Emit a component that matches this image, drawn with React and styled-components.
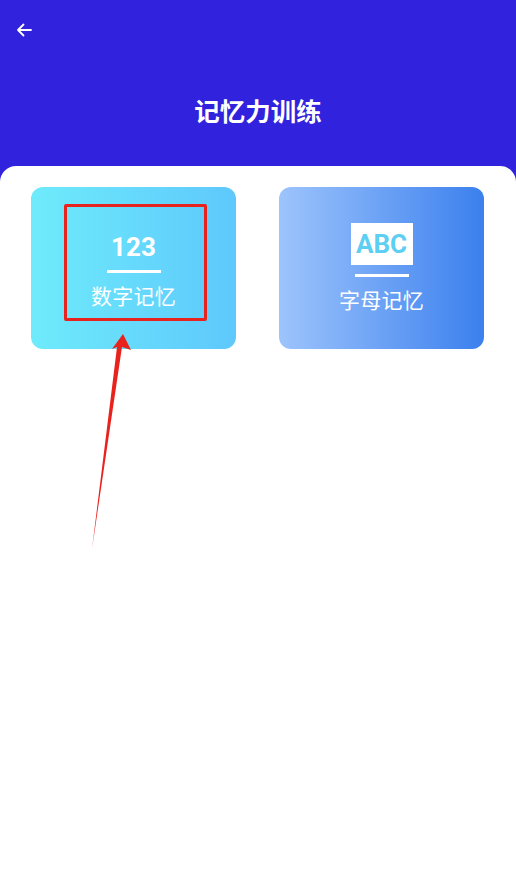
import React from "react";
import styled, { createGlobalStyle } from "styled-components";

const Global = createGlobalStyle`
  html, body { margin: 0; padding: 0; background: #3123dd; }
  body { font-family: Roboto, "Noto Sans CJK SC", sans-serif; }
  #root { min-height: 896px; }
`;

const Page = styled.div`
  width: 516px;
  height: 896px;
  display: flex;
  flex-direction: column;
  background: #3123dd;
  position: relative;
  overflow: hidden;
`;

const Header = styled.header`
  height: 166px;
  display: flex;
  flex-direction: column;
  padding: 0 0 0 14px;
  box-sizing: border-box;
`;

const BackButton = styled.button`
  width: 20px;
  height: 20px;
  margin-top: 20px;
  padding: 0;
  border: 0;
  background: transparent;
  display: flex;
  align-items: center;
  justify-content: center;
  cursor: pointer;
`;

const Title = styled.h1`
  margin: 53px 0 0 -14px;
  text-align: center;
  color: #fff;
  font-family: "Noto Sans CJK SC", sans-serif;
  font-size: 25.5px;
  font-weight: 700;
  line-height: 34px;
`;

const Panel = styled.main`
  flex: 1;
  background: #fff;
  border-radius: 16px 16px 0 0;
  display: grid;
  grid-template-columns: 205px 205px;
  column-gap: 43px;
  align-content: start;
  padding: 21px 0 0 31px;
`;

const Card = styled.div`
  height: 162px;
  border-radius: 12px;
  background: ${(p) => p.$bg};
  display: flex;
  flex-direction: column;
  align-items: center;
  justify-content: center;
  color: #fff;
  position: relative;
`;

const Number = styled.div`
  font-family: Roboto, sans-serif;
  font-weight: 700;
  font-size: 26px;
  line-height: 30px;
  margin-top: 4px;
`;

const AbcBox = styled.div`
  width: 62px;
  height: 42px;
  background: #fff;
  display: flex;
  align-items: center;
  justify-content: center;
  font-family: Roboto, sans-serif;
  font-weight: 700;
  font-size: 26px;
  color: #5ccff2;
`;

const Bar = styled.div`
  width: 54px;
  height: 3px;
  background: #fff;
  margin-top: ${(p) => p.$mt}px;
`;

const Label = styled.div`
  font-family: "Noto Sans CJK SC", sans-serif;
  font-size: 21px;
  line-height: 27px;
  margin-top: 9px;
  letter-spacing: 0.3px;
`;

const Highlight = styled.div`
  position: absolute;
  left: 33px;
  top: 17px;
  width: 137px;
  height: 111px;
  border: 3px solid #e8231e;
  border-radius: 2px;
`;

const ArrowOverlay = styled.svg`
  position: absolute;
  left: 0;
  top: 0;
  pointer-events: none;
`;

export default function App() {
  return (
    <>
      <Global />
      <Page>
        <Header>
          <BackButton aria-label="back">
            <svg width="18" height="18" viewBox="0 0 18 18" fill="none">
              <path d="M16 9H3M8.5 3.5L3 9l5.5 5.5" stroke="#fff" strokeWidth="1.8" strokeLinecap="round" strokeLinejoin="round" />
            </svg>
          </BackButton>
          <Title>记忆力训练</Title>
        </Header>
        <Panel>
          <Card $bg="linear-gradient(90deg, #6eebfb 0%, #5ec8fc 100%)">
            <Number>123</Number>
            <Bar $mt={8} />
            <Label>数字记忆</Label>
            <Highlight />
          </Card>
          <Card $bg="linear-gradient(90deg, #9dc4fc 0%, #3b80ee 100%)">
            <AbcBox>ABC</AbcBox>
            <Bar $mt={9} />
            <Label>字母记忆</Label>
          </Card>
        </Panel>
        <ArrowOverlay width="516" height="896" viewBox="0 0 516 896">
          <path d="M123 334 L131 350 L122 347 L92 549 L117 347 L112 349 Z" fill="#e8231e" />
        </ArrowOverlay>
      </Page>
    </>
  );
}
